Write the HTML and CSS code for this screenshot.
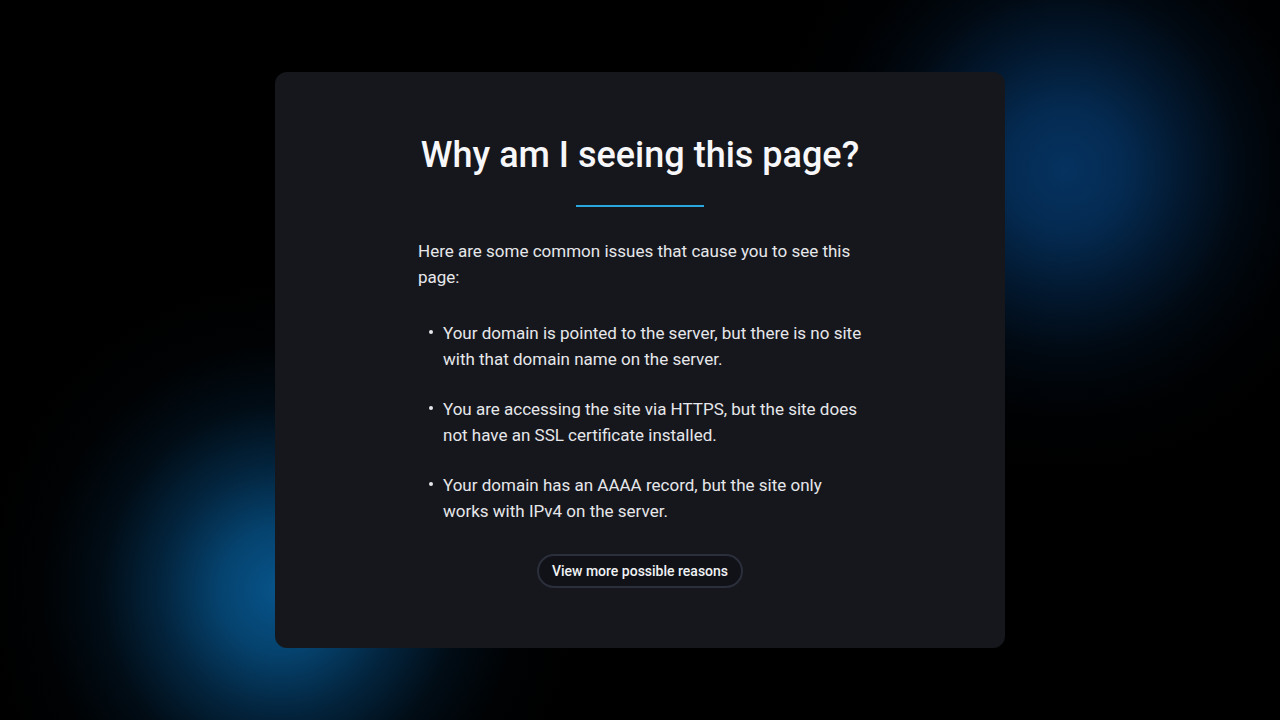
FILE: index.html
```html
<!DOCTYPE html>
<html lang="en">
<head>
<meta charset="utf-8">
<title>Why am I seeing this page?</title>
<link rel="stylesheet" href="styles.css">
</head>
<body>
<main class="card">
  <h1 class="title">Why am I seeing this page?</h1>
  <div class="divider"></div>
  <div class="content">
    <p class="intro">Here are some common issues that cause you to see this page:</p>
    <ul class="reasons">
      <li>Your domain is pointed to the server, but there is no site with that domain name on the server.</li>
      <li>You are accessing the site via HTTPS, but the site does not have an SSL certificate installed.</li>
      <li>Your domain has an AAAA record, but the site only works with IPv4 on the server.</li>
    </ul>
  </div>
  <a class="more-btn" href="#">View more possible reasons</a>
</main>
</body>
</html>
```

FILE: styles.css
```css
html, body {
  margin: 0;
  padding: 0;
}
body {
  width: 1280px;
  height: 720px;
  overflow: hidden;
  font-family: Roboto, "Noto Sans", "Liberation Sans", sans-serif;
  background-color: #000;
  background-image:
    radial-gradient(ellipse 300px 310px at 1065px 170px,
      rgba(5, 50, 96, 1) 0%, rgba(5, 48, 92, 0.88) 20%, rgba(4, 40, 78, 0.6) 40%,
      rgba(3, 28, 56, 0.3) 60%, rgba(2, 14, 30, 0.1) 80%, rgba(0, 0, 0, 0) 100%),
    radial-gradient(ellipse 300px 310px at 280px 590px,
      rgba(7, 84, 138, 1) 0%, rgba(6, 76, 126, 0.88) 20%, rgba(5, 60, 102, 0.6) 40%,
      rgba(3, 40, 70, 0.3) 60%, rgba(2, 20, 36, 0.1) 80%, rgba(0, 0, 0, 0) 100%);
  display: flex;
  align-items: center;
  justify-content: center;
}
.card {
  width: 730px;
  height: 576px;
  box-sizing: border-box;
  background: #16171d;
  border-radius: 12px;
  padding-top: 62px;
  display: flex;
  flex-direction: column;
  align-items: center;
}
.title {
  margin: 0;
  font-size: 36px;
  line-height: 43px;
  font-weight: 500;
  color: #f7f7f9;
  letter-spacing: 0;
}
.divider {
  width: 128px;
  height: 2px;
  margin-top: 28px;
  background: #2aa6df;
}
.content {
  width: 444px;
  margin-top: 31px;
  color: #e6e7ea;
  font-size: 17px;
  line-height: 26px;
}
.intro {
  margin: 0;
}
.reasons {
  list-style: none;
  margin: 30px 0 0;
  padding: 0;
  display: flex;
  flex-direction: column;
  gap: 24px;
}
.reasons li {
  display: flex;
  align-items: flex-start;
}
.reasons li::before {
  content: "";
  flex: none;
  width: 4px;
  height: 4px;
  border-radius: 50%;
  background: #e6e7ea;
  margin: 10px 10px 0 11px;
}
.more-btn {
  margin-top: 30px;
  display: inline-block;
  padding: 6px 13px;
  border: 2px solid #2b2f3b;
  border-radius: 999px;
  background: #101218;
  color: #f1f2f4;
  font-size: 14px;
  line-height: 18px;
  font-weight: 500;
  text-decoration: none;
}
```
